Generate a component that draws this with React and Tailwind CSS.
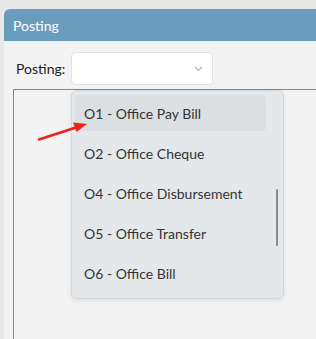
import React from "react";

const items = [
  "O1 - Office Pay Bill",
  "O2 - Office Cheque",
  "O4 - Office Disbursement",
  "O5 - Office Transfer",
  "O6 - Office Bill",
];

export default function App() {
  return (
    <div
      className="relative w-[316px] h-[339px] overflow-hidden bg-[#e8e8e8] pt-[9px] pl-[4px]"
      style={{ fontFamily: 'Lato, "Noto Sans", sans-serif' }}
    >
      <div className="h-full flex flex-col bg-[#f3f3f3] rounded-tl-[6px] overflow-hidden">
        <div className="h-[32px] shrink-0 bg-[#6a9dbd] pl-[9px] flex items-center text-white text-[14px]">
          Posting
        </div>
        <div className="flex-1 flex flex-col pt-[11px] pl-[12px]">
          <div className="flex items-center">
            <span className="w-[55px] text-[14px] text-[#222]">Posting:</span>
            <div className="w-[142px] h-[33px] bg-white rounded-[4px] border border-[#e2e2e2] flex items-center justify-end pr-[9px]">
              <svg width="9" height="6" viewBox="0 0 9 6" fill="none">
                <path d="M1 1l3.5 3.5L8 1" stroke="#a9b4c2" strokeWidth="1.2" />
              </svg>
            </div>
          </div>
          <div className="relative flex-1 mt-[4px] ml-[-3px] border-l border-t border-[#7d8a93]">
            <div className="absolute left-[57px] top-[0px] w-[213px] h-[209px] bg-[#e5e8eb] border border-[#cfd8e0] rounded-[6px] shadow-[0_2px_6px_rgba(0,0,0,0.08)] flex pt-[4px] pl-[3px]">
              <div className="w-[191px] flex flex-col gap-[4px]">
                {items.map((t, i) => (
                  <div
                    key={t}
                    className={
                      "h-[36px] flex items-center pl-[9px] rounded-[4px] text-[14px] text-[#333] " +
                      (i === 0 ? "bg-[#dcdfe2]" : "")
                    }
                  >
                    {t}
                  </div>
                ))}
              </div>
              <div className="ml-[10px] mt-[94px] w-[2px] h-[57px] bg-[#8a8a8a] rounded-[1px]" />
            </div>
          </div>
        </div>
      </div>
      <svg className="absolute left-0 top-0" width="316" height="339">
        <line x1="39" y1="139.5" x2="76" y2="127.5" stroke="#f0201a" strokeWidth="2.4" strokeLinecap="round" />
        <polygon points="87,124 73,122.5 76.5,132" fill="#f0201a" />
      </svg>
    </div>
  );
}
